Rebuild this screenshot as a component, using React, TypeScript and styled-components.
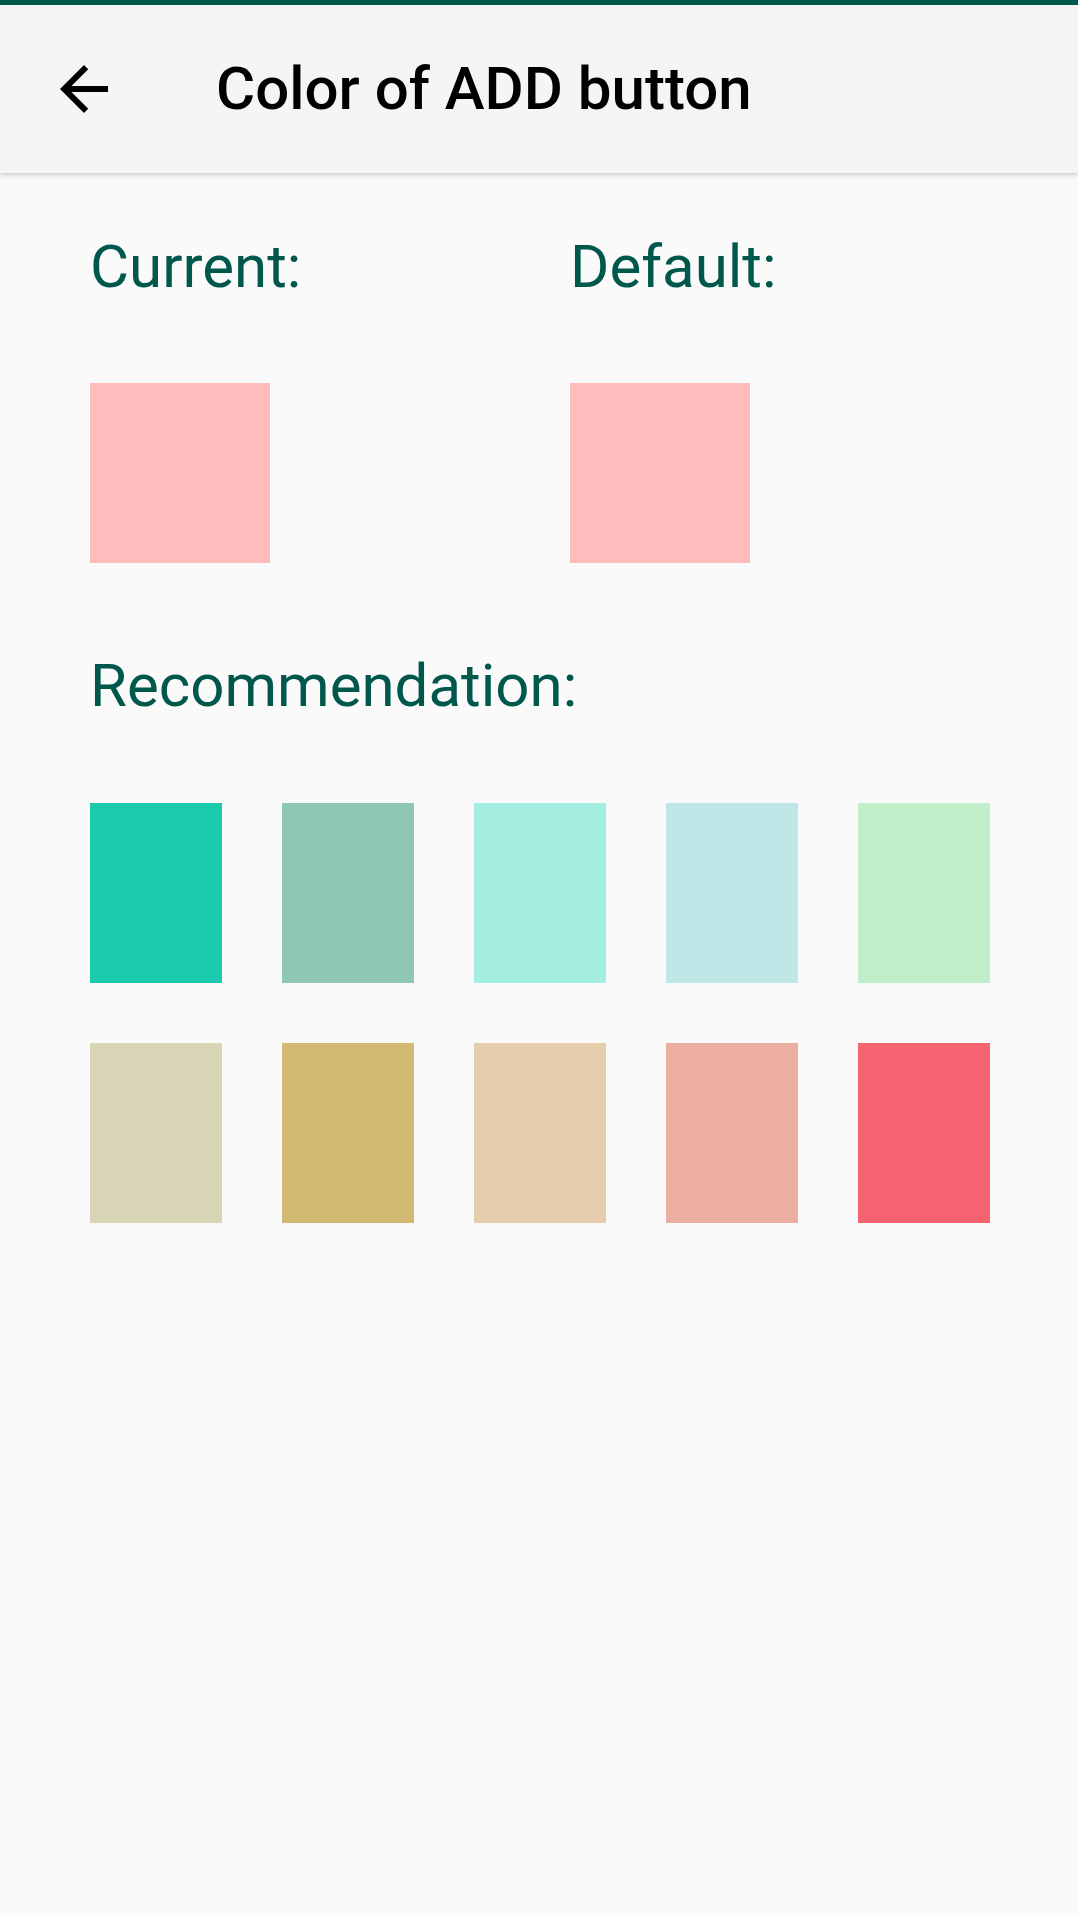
import styled, { createGlobalStyle } from "styled-components";

const GlobalStyle = createGlobalStyle`
    html, body {
        margin: 0;
        padding: 0;
        background: #fafafa;
    }
    body {
        font-family: Roboto, "Noto Sans", sans-serif;
    }
`

const Screen = styled.div`
    width: 1078px;
    min-height: 1916px;
    background: #fafafa;
    display: flex;
    flex-direction: column;
`

const StatusStrip = styled.div`
    height: 5px;
    background: #00574b;
`

const Toolbar = styled.header`
    height: 168px;
    background: #f5f5f5;
    display: flex;
    align-items: center;
    box-shadow: 0 3px 5px rgba(0, 0, 0, 0.12), 0 1px 2px rgba(0, 0, 0, 0.08);
    position: relative;
    z-index: 1;
`

const BackButton = styled.button`
    width: 72px;
    height: 72px;
    margin-left: 48px;
    padding: 0;
    border: none;
    background: transparent;
    display: flex;
    align-items: center;
    justify-content: center;
`

const Title = styled.h1`
    margin: 0 0 0 96px;
    font-size: 60px;
    font-weight: 500;
    color: #000000;
    line-height: 72px;
`

const Content = styled.main`
    padding: 58px 90px 0 90px;
    display: flex;
    flex-direction: column;
`

const TopRow = styled.div`
    display: grid;
    grid-template-columns: 480px 1fr;
`

const Column = styled.div`
    display: flex;
    flex-direction: column;
`

const Label = styled.p`
    margin: 0;
    font-size: 60px;
    line-height: 72px;
    font-weight: 400;
    color: #00574b;
`

const BigSwatch = styled.div<{ $color: string }>`
    width: 180px;
    height: 180px;
    margin-top: 80px;
    background: ${p => p.$color};
`

const SectionLabel = styled(Label)`
    margin-top: 87px;
`

const Palette = styled.div`
    margin-top: 81px;
    display: grid;
    grid-template-columns: repeat(5, 132px);
    grid-auto-rows: 180px;
    column-gap: 60px;
    row-gap: 60px;
`

const Swatch = styled.div<{ $color: string }>`
    background: ${p => p.$color};
`

const recommended = [
    "#1ccbad", "#8ec8b5", "#a3eee0", "#bfe7e8", "#c0edca",
    "#d8d5b7", "#d2b974", "#e6cdac", "#ebaea0", "#f4636f",
]

const ArrowBack = () => (
    <svg width="72" height="72" viewBox="0 0 24 24">
        <path d="M20 11H7.83l5.59-5.59L12 4l-8 8 8 8 1.41-1.41L7.83 13H20v-2z" fill="#000" />
    </svg>
)

export default function App() {
    return (
        <Screen>
            <GlobalStyle />
            <StatusStrip />
            <Toolbar>
                <BackButton aria-label="back">
                    <ArrowBack />
                </BackButton>
                <Title>Color of ADD button</Title>
            </Toolbar>
            <Content>
                <TopRow>
                    <Column>
                        <Label>Current:</Label>
                        <BigSwatch $color="#ffbcbc" />
                    </Column>
                    <Column>
                        <Label>Default:</Label>
                        <BigSwatch $color="#ffbcbc" />
                    </Column>
                </TopRow>
                <SectionLabel>Recommendation:</SectionLabel>
                <Palette>
                    {recommended.map(c => (
                        <Swatch key={c} $color={c} />
                    ))}
                </Palette>
            </Content>
        </Screen>
    )
}
